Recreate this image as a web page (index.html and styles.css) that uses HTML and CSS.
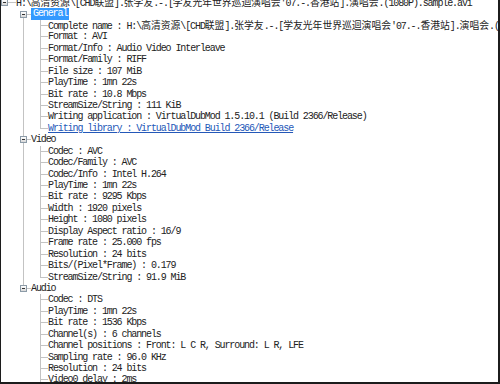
FILE: index.html
```html
<!DOCTYPE html>
<html lang="zh-CN">
<head>
    <meta charset="UTF-8">
    <title>MediaInfo - sample.avi</title>
    <link rel="stylesheet" href="styles.css">
</head>
<body>
    <div class="frame">
        <ul class="tree">
            <li>
                <div class="row">
                    <span class="box"></span><span class="stub root-stub"></span>
                    <span class="label">H:\<span class="cjk">高清资源</span>\[CHD<span class="cjk">联盟</span>].<span class="cjk">张学友</span>.-.[<span class="cjk">学友光年世界巡迴演唱会</span>'07.-.<span class="cjk">香港站</span>].<span class="cjk">演唱会</span>.(1080P).sample.avi</span>
                </div>
                <ul class="group">
                    <li>
                        <div class="row branch">
                            <span class="box"></span><span class="stub"></span><span class="label sel">General</span>
                        </div>
                        <ul class="leaves">
                            <li>Complete name : H:\<span class="cjk">高清资源</span>\[CHD<span class="cjk">联盟</span>].<span class="cjk">张学友</span>.-.[<span class="cjk">学友光年世界巡迴演唱会</span>'07.-.<span class="cjk">香港站</span>].<span class="cjk">演唱会</span>.(1080P).sample.avi</li>
                            <li>Format : AVI</li>
                            <li>Format/Info : Audio Video Interleave</li>
                            <li>Format/Family : RIFF</li>
                            <li>File size : 107 MiB</li>
                            <li>PlayTime : 1mn 22s</li>
                            <li>Bit rate : 10.8 Mbps</li>
                            <li>StreamSize/String : 111 KiB</li>
                            <li>Writing application : VirtualDubMod 1.5.10.1 (Build 2366/Release)</li>
                            <li class="link">Writing library : VirtualDubMod Build 2366/Release</li>
                        </ul>
                    </li>
                    <li>
                        <div class="row branch">
                            <span class="box"></span><span class="stub"></span><span class="label">Video</span>
                        </div>
                        <ul class="leaves">
                            <li>Codec : AVC</li>
                            <li>Codec/Family : AVC</li>
                            <li>Codec/Info : Intel H.264</li>
                            <li>PlayTime : 1mn 22s</li>
                            <li>Bit rate : 9295 Kbps</li>
                            <li>Width : 1920 pixels</li>
                            <li>Height : 1080 pixels</li>
                            <li>Display Aspect ratio : 16/9</li>
                            <li>Frame rate : 25.000 fps</li>
                            <li>Resolution : 24 bits</li>
                            <li>Bits/(Pixel*Frame) : 0.179</li>
                            <li>StreamSize/String : 91.9 MiB</li>
                        </ul>
                    </li>
                    <li>
                        <div class="row branch">
                            <span class="box"></span><span class="stub"></span><span class="label">Audio</span>
                        </div>
                        <ul class="leaves open">
                            <li>Codec : DTS</li>
                            <li>PlayTime : 1mn 22s</li>
                            <li>Bit rate : 1536 Kbps</li>
                            <li>Channel(s) : 6 channels</li>
                            <li>Channel positions : Front: L C R, Surround: L R, LFE</li>
                            <li>Sampling rate : 96.0 KHz</li>
                            <li>Resolution : 24 bits</li>
                            <li>Video0 delay : 2ms</li>
                        </ul>
                    </li>
                </ul>
            </li>
        </ul>
    </div>
</body>
</html>
```

FILE: styles.css
```css
body {
    margin: 0;
    background: #fff;
    font-family: "Liberation Mono", "Noto Sans CJK SC", monospace;
    font-size: 10px;
    color: #222;
}
.frame {
    width: 500px;
    height: 384px;
    box-sizing: border-box;
    border-left: 1px solid #1c1c1c;
    border-right: 2px solid #1c1c1c;
    border-bottom: 2px solid #1c1c1c;
    overflow: hidden;
    background: #fff;
}
.tree, .tree ul {
    list-style: none;
    margin: 0;
    padding: 0;
}
.tree {
    margin-top: -3px;
}
.tree li {
    position: relative;
}
.row {
    display: flex;
    align-items: center;
    height: 11.45px;
    line-height: 11.45px;
    white-space: nowrap;
    letter-spacing: -1.1px;
}
.branch {
    padding-left: 19px;
}
.box {
    position: relative;
    z-index: 1;
    flex: none;
    width: 7px;
    height: 7px;
    box-sizing: border-box;
    border: 1px solid #8c9ba8;
    background: linear-gradient(#fff, #d8d8d8);
}
.box::after {
    content: "";
    position: absolute;
    left: 1px;
    top: 2px;
    width: 3px;
    height: 1px;
    background: #333;
}
.stub {
    flex: none;
    width: 4px;
    height: 0;
    border-top: 1px solid #c3c3c3;
}
.root-stub {
    width: 8px;
}
.label {
    flex: none;
}
.sel {
    background: #3399ff;
    color: #fff;
    padding: 0 2px 0 2px;
    height: 11.45px;
}
.cjk {
    font-family: "Noto Sans CJK SC", sans-serif;
    font-size: 9.8px;
    letter-spacing: 0;
}

/* sibling line between General / Video / Audio */
.group > li::before {
    content: "";
    position: absolute;
    left: 22px;
    top: 0;
    bottom: 0;
    border-left: 1px solid #c3c3c3;
}
.group > li:first-child::before {
    top: 6px;
}
.group > li:last-child::before {
    bottom: auto;
    height: 6px;
}

.leaves li {
    height: 11.45px;
    line-height: 11.45px;
    padding-left: 47px;
    white-space: nowrap;
    letter-spacing: -1.1px;
}
.leaves li::before {
    content: "";
    position: absolute;
    left: 39px;
    top: 0;
    bottom: 0;
    border-left: 1px solid #c3c3c3;
}
.leaves li:last-child::before {
    bottom: auto;
    height: 6px;
}
.leaves.open li:last-child::before {
    bottom: 0;
    height: auto;
}
.leaves li::after {
    content: "";
    position: absolute;
    left: 40px;
    top: 5px;
    width: 7px;
    border-top: 1px solid #c3c3c3;
}
.leaves .link {
    color: #2458b8;
    text-decoration: underline;
}
```
